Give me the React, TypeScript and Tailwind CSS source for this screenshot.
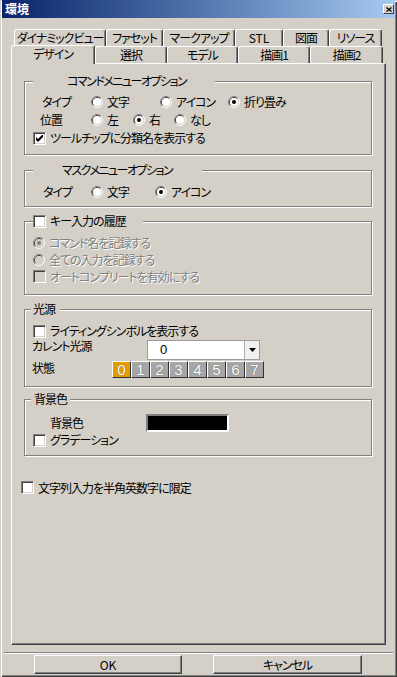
import React from 'react';

type BoxProps = { checked?: boolean; disabled?: boolean };

function Radio({ checked = false, disabled = false }: BoxProps) {
  return (
    <svg width="12" height="12" viewBox="0 0 12 12" className="shrink-0">
      <path d="M9.89 2.11A5.5 5.5 0 0 0 2.11 9.89" fill="none" stroke="#808080" />
      <path d="M9.89 2.11A5.5 5.5 0 0 1 2.11 9.89" fill="none" stroke="#ffffff" />
      <path d="M9.18 2.82A4.5 4.5 0 0 0 2.82 9.18" fill="none" stroke="#404040" />
      <path d="M9.18 2.82A4.5 4.5 0 0 1 2.82 9.18" fill="none" stroke="#d4d0c8" />
      <circle cx="6" cy="6" r="4" fill={disabled ? '#d4d0c8' : '#ffffff'} />
      {checked && <circle cx="6" cy="6" r="2" fill={disabled ? '#808080' : '#000000'} />}
    </svg>
  );
}

function Check({ checked = false, disabled = false }: BoxProps) {
  return (
    <span
      className={`flex h-[13px] w-[13px] shrink-0 items-center justify-center border border-t-[#808080] border-l-[#808080] border-r-white border-b-white shadow-[inset_1px_1px_0_#404040,inset_-1px_-1px_0_#d4d0c8] ${
        disabled ? 'bg-[#d4d0c8]' : 'bg-white'
      }`}
    >
      {checked && (
        <svg width="7" height="7" viewBox="0 0 7 7">
          <path d="M0 2L2 4L7 -1V2L2 7L0 5Z" fill="#000" />
        </svg>
      )}
    </span>
  );
}

const disabledText = 'text-[#808080] [text-shadow:1px_1px_0_#fff]';

function RadioItem({ label, checked, disabled }: { label: string } & BoxProps) {
  return (
    <span className="flex items-center gap-[4px]">
      <Radio checked={checked} disabled={disabled} />
      <span className={disabled ? disabledText : ''}>{label}</span>
    </span>
  );
}

function CheckItem({ label, checked, disabled }: { label: string } & BoxProps) {
  return (
    <span className="flex items-center gap-[4px]">
      <Check checked={checked} disabled={disabled} />
      <span className={disabled ? disabledText : ''}>{label}</span>
    </span>
  );
}

const groupBox = 'w-[348px] border border-[#808080] shadow-[inset_1px_1px_0_#fff,1px_1px_0_#fff]';
const tab =
  'flex justify-center bg-[#d4d0c8] border-t border-l border-r border-t-white border-l-white border-r-[#404040] shadow-[inset_-1px_0_0_#808080] rounded-t-[3px]';
const button =
  'flex items-center justify-center border border-t-white border-l-white border-r-[#404040] border-b-[#404040] shadow-[inset_-1px_-1px_0_#808080]';

export default function App() {
  const backTabs = [
    { label: 'ダイナミックビュー', w: 'w-[92px]' },
    { label: 'ファセット', w: 'w-[57px]' },
    { label: 'マークアップ', w: 'w-[72px]' },
    { label: 'STL', w: 'w-[48px] tracking-normal' },
    { label: '図面', w: 'w-[46px]' },
    { label: 'リソース', w: 'w-[53px]' },
  ];
  const frontTabs = [
    { label: '選択', w: 'w-[72px]' },
    { label: 'モデル', w: 'w-[71px]' },
    { label: '描画1', w: 'w-[72px]' },
    { label: '描画2', w: 'w-[73px]' },
  ];
  const lights = ['0', '1', '2', '3', '4', '5', '6', '7'];

  return (
    <div className="flex h-[677px] w-[397px] flex-col bg-[#d4d0c8] px-[2px] text-[12px] leading-[14px] tracking-[-1px] text-black font-['Noto_Sans_CJK_JP',sans-serif] [font-feature-settings:'palt'] shadow-[inset_1px_1px_0_#d4d0c8,inset_2px_2px_0_#fff,inset_-1px_-1px_0_#404040,inset_-2px_-2px_0_#808080]">
      {/* title bar */}
      <div className="flex h-[18px] shrink-0 items-center justify-between bg-linear-to-r from-[#0a246a] to-[#a6caf0] pl-[3px] pr-[1px]">
        <span className="font-bold tracking-normal text-white">環境</span>
        <span className="flex h-[10px] w-[11px] items-center justify-center bg-[#d4d0c8] border border-t-white border-l-white border-r-[#404040] border-b-[#404040]">
          <svg width="6" height="5" viewBox="0 0 6 5">
            <path d="M0.5 0.5L5.5 4.5M5.5 0.5L0.5 4.5" stroke="#000" strokeWidth="1.2" />
          </svg>
        </span>
      </div>

      {/* tabs */}
      <div className="mt-[11px] pl-[9px]">
        <div className="ml-[3px] flex h-[17px]">
          {backTabs.map((t) => (
            <div key={t.label} className={`${tab} ${t.w} h-[17px] items-center`}>
              {t.label}
            </div>
          ))}
        </div>
        <div className="flex h-[17px]">
          <div className={`${tab} relative z-10 -mt-[1px] h-[19px] w-[84px] items-start pt-[1px]`}>デザイン</div>
          {frontTabs.map((t) => (
            <div key={t.label} className={`${tab} ${t.w} h-[17px] items-start pt-[1px]`}>
              {t.label}
            </div>
          ))}
        </div>

        {/* panel */}
        <div className="h-[582px] w-[375px] border border-t-white border-l-white border-r-[#404040] border-b-[#404040] shadow-[inset_-1px_-1px_0_#808080] pl-[12px] pt-[17px]">
          {/* command menu options */}
          <div className={`${groupBox} h-[74px]`}>
            <div className="-mt-[8px] ml-[8px] flex h-[14px]">
              <span className="w-[182px] bg-[#d4d0c8] pl-[34px] tracking-[-1.5px]">コマンドメニューオプション</span>
            </div>
            <div className="mt-[5px]">
              <div className="flex h-[18px] items-center pl-[17px]">
                <span className="w-[49px]">タイプ</span>
                <span className="w-[69px]"><RadioItem label="文字" /></span>
                <span className="w-[68px]"><RadioItem label="アイコン" /></span>
                <RadioItem label="折り畳み" checked />
              </div>
              <div className="flex h-[18px] items-center pl-[15px]">
                <span className="w-[51px]">位置</span>
                <span className="w-[42px]"><RadioItem label="左" /></span>
                <span className="w-[41px]"><RadioItem label="右" checked /></span>
                <RadioItem label="なし" />
              </div>
              <div className="flex h-[18px] items-center pl-[8px]">
                <CheckItem label="ツールチップに分類名を表示する" checked />
              </div>
            </div>
          </div>

          {/* mask menu options */}
          <div className={`${groupBox} mt-[15px] h-[37px]`}>
            <div className="-mt-[8px] ml-[8px] flex h-[14px]">
              <span className="w-[169px] bg-[#d4d0c8] pl-[29px] tracking-[-1.5px]">マスクメニューオプション</span>
            </div>
            <div className="mt-[6px] flex h-[18px] items-center pl-[18px]">
              <span className="w-[48px]">タイプ</span>
              <span className="w-[64px]"><RadioItem label="文字" /></span>
              <RadioItem label="アイコン" checked />
            </div>
          </div>

          {/* key input history */}
          <div className={`${groupBox} mt-[14px] h-[74px]`}>
            <div className="-mt-[8px] ml-[8px] flex h-[14px]">
              <span className="flex w-[110px] items-center bg-[#d4d0c8]">
                <CheckItem label="キー入力の履歴" />
              </span>
            </div>
            <div className="mt-[6px] pl-[8px]">
              <div className="flex h-[17px] items-center">
                <RadioItem label="コマンド名を記録する" checked disabled />
              </div>
              <div className="flex h-[17px] items-center">
                <RadioItem label="全ての入力を記録する" disabled />
              </div>
              <div className="flex h-[17px] items-center">
                <CheckItem label="オートコンプリートを有効にする" disabled />
              </div>
            </div>
          </div>

          {/* light source */}
          <div className={`${groupBox} mt-[14px] h-[78px]`}>
            <div className="-mt-[8px] ml-[6px] flex h-[14px]">
              <span className="w-[29px] bg-[#d4d0c8] pl-[2px]">光源</span>
            </div>
            <div className="mt-[7px] flex h-[16px] items-center pl-[8px]">
              <CheckItem label="ライティングシンボルを表示する" />
            </div>
            <div className="flex h-[21px] items-start pl-[7px]">
              <span className="w-[115px]">カレント光源</span>
              <div className="mt-[1px] flex h-[20px] w-[113px] border border-[#9c9c9c] bg-white">
                <span className="flex flex-1 items-center pl-[12px] font-['Liberation_Sans',sans-serif] text-[13px] tracking-normal">0</span>
                <span className="flex w-[15px] items-center justify-center border-l border-l-[#b0b0b0] bg-[#f0f0f0]">
                  <svg width="7" height="4" viewBox="0 0 7 4">
                    <path d="M0 0H7L3.5 4Z" fill="#000" />
                  </svg>
                </span>
              </div>
            </div>
            <div className="mt-[1px] flex h-[17px] items-start pl-[7px]">
              <span className="w-[80px]">状態</span>
              <div className="flex">
                {lights.map((n) => (
                  <span
                    key={n}
                    className={`flex h-[17px] w-[19px] items-center justify-center border border-t-white border-l-white border-r-[#303030] border-b-[#303030] font-['Liberation_Sans',sans-serif] text-[15px] tracking-normal text-white [text-shadow:0_0_1px_#505050] ${
                      n === '0' ? 'bg-[#e59c00]' : 'bg-[#a6a6a6]'
                    }`}
                  >
                    {n}
                  </span>
                ))}
              </div>
            </div>
          </div>

          {/* background colour */}
          <div className={`${groupBox} mt-[12px] h-[57px]`}>
            <div className="-mt-[8px] ml-[6px] flex h-[14px]">
              <span className="w-[39px] bg-[#d4d0c8] pl-[3px]">背景色</span>
            </div>
            <div className="mt-[8px] flex h-[18px] items-center pl-[25px]">
              <span className="w-[96px]">背景色</span>
              <span className="h-[18px] w-[83px] border-2 border-t-[#808080] border-l-[#808080] border-r-white border-b-white bg-black" />
            </div>
            <div className="flex h-[16px] items-center pl-[8px]">
              <CheckItem label="グラデーション" />
            </div>
          </div>

          <div className="-ml-[3px] mt-[25px] flex h-[13px] items-center">
            <CheckItem label="文字列入力を半角英数字に限定" />
          </div>
        </div>
      </div>

      {/* separator + buttons */}
      <div className="ml-[2px] mt-[7px] h-[2px] w-[389px] border-t border-b border-t-[#808080] border-b-white" />
      <div className="mt-[1px] flex h-[19px]">
        <div className={`${button} ml-[32px] w-[148px] tracking-normal`}>OK</div>
        <div className={`${button} ml-[31px] w-[149px]`}>キャンセル</div>
      </div>
    </div>
  );
}
